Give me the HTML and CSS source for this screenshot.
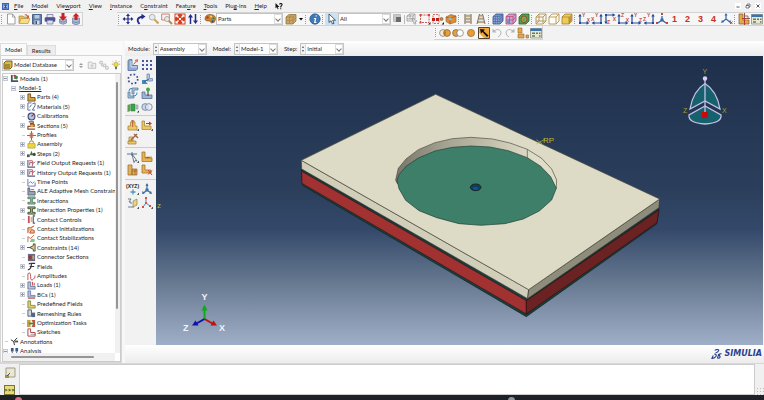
FILE: index.html
```html
<!DOCTYPE html>
<html lang="en">
<head>
<meta charset="utf-8">
<title>Model-1 Assembly</title>
<link rel="stylesheet" href="styles.css">
</head>
<body>
<svg class="defs" aria-hidden="true">
  <defs>
    <symbol id="new" viewBox="0 0 12 12"><path d="M2.500 1h5l2.500 3v7h-7.500z" fill="#fff" stroke="#888" stroke-width=".8"/><path d="M7.500 1v3H10" fill="none" stroke="#888" stroke-width=".7"/></symbol>
    <symbol id="open" viewBox="0 0 12 12"><path d="M1 10V3h4l1 1h4v2" fill="#e8bd5c" stroke="#9a7833" stroke-width=".6"/><path d="M1 10.500l2-5h9l-2 5z" fill="#f8dc83" stroke="#a98333" stroke-width=".6"/><path d="M6 2q3-2 4 1l1-1v3H8.500l1-1Q8.500 2 6 2z" fill="#d55a30"/></symbol>
    <symbol id="save" viewBox="0 0 12 12"><path d="M1.500 1.500h9v9.500h-9z" fill="#5f7fac" stroke="#354e75" stroke-width=".8"/><path d="M3.500 2h5v3.500h-5z" fill="#b9c9df"/><path d="M3.500 7.500h5V11h-5z" fill="#d9dde3"/><path d="M4.500 8h1.500v3H4.500z" fill="#354e75"/></symbol>
    <symbol id="print" viewBox="0 0 12 12"><path d="M3 1.500h6V5H3z" fill="#e8e8ef" stroke="#55588a" stroke-width=".6"/><rect x=".7" y="4.200" width="10.600" height="4.500" rx="1" fill="#4d5396"/><path d="M3 7.200h6V11H3z" fill="#dedff0" stroke="#55588a" stroke-width=".6"/></symbol>
    <symbol id="dbdown" viewBox="0 0 12 12"><path d="M2.500 6v4q3.500 2.500 7 0V6z" fill="#a9bad4" stroke="#5e6f90" stroke-width=".6"/><path d="M3 8.200q3 1.800 6 0" fill="none" stroke="#5e6f90" stroke-width=".6"/><path d="M4.500 0h3v3.500H10L6 7.800 2 3.500h2.500z" fill="#cd1f24"/></symbol>
    <symbol id="dbup" viewBox="0 0 12 12"><path d="M2.500 5v5.500q3.500 2.500 7 0V5z" fill="#a9bad4" stroke="#5e6f90" stroke-width=".6"/><path d="M3 8.700q3 1.800 6 0" fill="none" stroke="#5e6f90" stroke-width=".6"/><path d="M6 0l3.500 3.500h-2V7h-3V3.500h-2z" fill="#cd1f24"/></symbol>
    <symbol id="pan" viewBox="0 0 12 12"><path d="M6 .5l2 2.500H6.600v2.400H9V4l2.500 2L9 8V6.600H6.600V9H8l-2 2.500L4 9h1.400V6.600H3V8L.5 6 3 4v1.400h2.400V3H4z" fill="#252b8c"/></symbol>
    <symbol id="rotate" viewBox="0 0 12 12"><path d="M4.500 11Q-.5 5 8 3.500" fill="none" stroke="#252b8c" stroke-width="1.800"/><path d="M6.500 .7l4 2.800-4 3z" fill="#252b8c"/></symbol>
    <symbol id="mag" viewBox="0 0 12 12"><path d="M6 6l4.500 4.500" stroke="#c9a25c" stroke-width="2"/><circle cx="4.200" cy="4.200" r="2.900" fill="#e5eaee" stroke="#b3b3af" stroke-width="1"/></symbol>
    <symbol id="magbox" viewBox="0 0 12 12"><path d="M.7 1h7.600v6H.7z" fill="none" stroke="#d45b4b" stroke-width=".8"/><path d="M7.500 7.500L11 11" stroke="#b98c3b" stroke-width="2"/><circle cx="6" cy="6" r="2.500" fill="#eee9dc" stroke="#a19b8c" stroke-width=".8"/></symbol>
    <symbol id="fit" viewBox="0 0 12 12"><path d="M.5.5h11v11H.5z" fill="#d4401f"/><path d="M1.500 1.500h3L3.500 2.500 5 4 4 5 2.500 3.500l-1 1zm9 0v3l-1-1L8 5 7 4l1.500-1.500-1-1zm-9 9v-3l1 1L4 7l1 1-1.500 1.500 1 1zm9 0h-3l1-1L7 8l1-1 1.500 1.500 1-1z" fill="#fff"/><path d="M5 5h2v2H5z" fill="#fff"/></symbol>
    <symbol id="updown" viewBox="0 0 12 12"><path d="M3.500 11V3M8.500 1v8" stroke="#252b8c" stroke-width="1.500"/><path d="M1 4.500l2.500-3.500L6 4.500zM6 7.500h5L8.500 11z" fill="#252b8c"/></symbol>
    <symbol id="palette" viewBox="0 0 12 12"><path d="M1 5q1-4 6-3.500 5 .5 4.500 5Q11 10 7.500 10q-1-.3-1.500-2L3 8Q.5 7.500 1 5z" fill="#c98438" stroke="#7d4d22" stroke-width=".6"/><circle cx="3.500" cy="4.500" r="1.200" fill="#d12c22"/><circle cx="7" cy="3.500" r="1.100" fill="#f3d544"/><circle cx="9.500" cy="5.500" r="1.100" fill="#2f8a3c"/><circle cx="8.500" cy="8.300" r="1.100" fill="#2450a4"/></symbol>
    <symbol id="cube" viewBox="0 0 12 12"><path d="M1 4l3-2.500h7V8l-3 3H1z" fill="#cba663" stroke="#8a6d38" stroke-width=".7"/><path d="M1 4h7v7M8 4l3-2.500M4.500 4v7M1 7.500h7l3-3M4.500 4L7.500 1.500" fill="none" stroke="#9d7d45" stroke-width=".6"/></symbol>
    <symbol id="info" viewBox="0 0 12 12"><circle cx="6" cy="6" r="5.200" fill="#3d78b8" stroke="#27588f" stroke-width=".7"/><path d="M6.700 2.200h1V3.500H6.400zM5 5h2.300L6.500 9h1l-.2.900H5L5.800 6H4.800z" fill="#fff"/></symbol>
    <symbol id="cursor" viewBox="0 0 12 12"><path d="M3 1v8.500l2-1.800L6.500 11 8 10.300 6.700 7.200h2.800z" fill="#fff" stroke="#30363d" stroke-width=".8"/></symbol>
    <symbol id="selgray" viewBox="0 0 12 12"><path d="M1.500 1.500h7v7h-7z" fill="#c8c8c8" stroke="#aaa" stroke-width=".7"/><path d="M4 4h5v5H4z" fill="#6b6b6b"/></symbol>
    <symbol id="wiregray" viewBox="0 0 12 12"><path d="M1 3l3-2h5v5L7 8H1zM1 3h6v5M7 3l2-2M4 1v5H1M4 6h5M5 5l5 5" fill="none" stroke="#999" stroke-width=".8"/><path d="M6 5l5 3-2 1 1 2H8z" fill="#ddd" stroke="#888" stroke-width=".5"/></symbol>
    <symbol id="selbox" viewBox="0 0 12 12"><path d="M1.500 2h8.500v7.500H1.500z" fill="none" stroke="#c84b3e" stroke-width=".9" stroke-dasharray="2 1"/><path d="M.5 1h2v2h-2zM9 1h2v2H9zM.5 8.500h2v2h-2z" fill="#cb4638"/><path d="M9 11.500l2.500-2.500v2.500z" fill="#222"/></symbol>
    <symbol id="selnode" viewBox="0 0 12 12"><path d="M1 1.500h6v9H1z" fill="none" stroke="#c84b3e" stroke-width=".8" stroke-dasharray="2 1"/><path d="M0 5h3v3H0zM4 5h3v3H4z" fill="#c11f1a"/><circle cx="9.500" cy="6" r="1.600" fill="#c98536" stroke="#7d4d22" stroke-width=".5"/><path d="M9.500 11.500L12 9v2.500z" fill="#222"/></symbol>
    <symbol id="orangebox" viewBox="0 0 12 12"><path d="M1 4l5-2.500L11 3v6L5 11 1 8.500z" fill="#e38d2f" stroke="#7d6444" stroke-width=".6"/><path d="M1 4l4 1.500L11 3M5 5.500V11" fill="none" stroke="#8a5a20" stroke-width=".7"/><path d="M3 5.500l3-1 1 2-2 1z" fill="#8ac0dd"/></symbol>
    <symbol id="persp1" viewBox="0 0 12 12"><path d="M3 1v10M9 1v10" stroke="#716a59" stroke-width="1"/><path d="M3 2h6v1.500H3zM3 5h6v1.500H3zM3 8h6v1.500H3z" fill="#c8b58c" stroke="#887653" stroke-width=".4"/></symbol>
    <symbol id="persp2" viewBox="0 0 12 12"><path d="M4.500 1L2 11M7.500 1L10 11" stroke="#716a59" stroke-width="1"/><path d="M4.500 2h3v1.300h-3zM3.700 5h4.600v1.400H3.500zM3 8.300h6v1.400H3z" fill="#c8b58c" stroke="#887653" stroke-width=".4"/></symbol>
    <symbol id="meshblue" viewBox="0 0 12 12"><path d="M1 3.500l3-2.500h7v7l-3 3H1z" fill="#8ba5d6" stroke="#33518b" stroke-width=".8"/><path d="M1 3.500h7V11M8 3.500L11 1M3.300 3.500V11M5.700 3.500V11M1 6h7l3-3M1 8.500h7l3-3M3 2h7v7" fill="none" stroke="#3f5f9c" stroke-width=".6"/></symbol>
    <symbol id="meshred" viewBox="0 0 12 12"><path d="M1 3.500l3-2.500h7v7l-3 3H1z" fill="#b9a7dd" stroke="#a34a6b" stroke-width=".8"/><path d="M1 3.500h7V11M8 3.500L11 1M4.500 3.500V11M1 7h7l3-3" fill="none" stroke="#cf4161" stroke-width=".7"/><path d="M2 7.500h2V10H2z" fill="#6f8cd0"/></symbol>
    <symbol id="meshgreen" viewBox="0 0 12 12"><path d="M1 4l3-3h7v7l-3 3H1z" fill="#4da349" stroke="#286229" stroke-width=".8"/><ellipse cx="6" cy="6.300" rx="3" ry="3.300" fill="#b8904c" stroke="#7a3d2a" stroke-width=".7"/><ellipse cx="6" cy="6.500" rx="1.200" ry="1.500" fill="#5aa551"/></symbol>
    <symbol id="wire1" viewBox="0 0 12 12"><path d="M1 4l3-3h7v7l-3 3H1zM1 4h7v7M8 4l3-3M4 1v7H1M4 8h7M4 8l-3 3" fill="none" stroke="#b5944e" stroke-width=".9"/></symbol>
    <symbol id="wire2" viewBox="0 0 12 12"><path d="M1 4l3-3h7v7l-3 3H1zM1 4h7v7M8 4l3-3" fill="#fffdf5" stroke="#b5944e" stroke-width=".9"/></symbol>
    <symbol id="solid" viewBox="0 0 12 12"><path d="M1 4l3-3h7v7l-3 3H1z" fill="#f0cb53" stroke="#92702c" stroke-width=".7"/><path d="M8 4l3-3v7l-3 3z" fill="#c3973b"/><path d="M1 4h7v7" fill="none" stroke="#92702c" stroke-width=".6"/></symbol>
    <symbol id="ax" viewBox="0 0 12 12"><path d="M2 2v8h8" fill="none" stroke="#244b9b" stroke-width="1.200"/><path d="M.3 3.500L2 .8l1.700 2.700zM8.500 8.300L11.500 10l-3 1.700zM1 9h2v2H1z" fill="#244b9b"/></symbol>
    <symbol id="axl" viewBox="0 0 12 12"><path d="M10 2v8H2" fill="none" stroke="#244b9b" stroke-width="1.200"/><path d="M8.300 3.500L10 .8l1.700 2.700zM3.500 8.300L.5 10l3 1.700zM9 9h2v2H9z" fill="#244b9b"/></symbol>
    <symbol id="axd" viewBox="0 0 12 12"><path d="M2 10V2h8" fill="none" stroke="#244b9b" stroke-width="1.200"/><path d="M.3 8.500L2 11.200l1.700-2.700zM8.500.3L11.500 2l-3 1.700zM1 1h2v2H1z" fill="#244b9b"/></symbol>
    <symbol id="tri" viewBox="0 0 12 12"><path d="M6 3v4L2 10M6 7l4 3" fill="none" stroke="#3667a8" stroke-width="1.300"/><path d="M5 0h2v2H5zM0 9h2v2H0zM10 9h2v2h-2z" fill="#c0473f"/><path d="M4.500 5.500h3v3h-3z" fill="#3667a8"/></symbol>
    <symbol id="tri2" viewBox="0 0 12 12"><path d="M5 1.500V6L1.500 9M5 6l4 3" fill="none" stroke="#3667a8" stroke-width="1.200"/><path d="M3.500 2.500L5 0l1.500 2.500zM0 10l1-3 2 2zM7.500 9l2-2 .5 3z" fill="#3667a8"/><path d="M9 8.500l2.500 2.500M11.500 8.500L9 11" stroke="#ce3a2e" stroke-width="1"/></symbol>
    <symbol id="query" viewBox="0 0 12 12"><path d="M1 1h4v6h6v4H1z" fill="#dfa94d" stroke="#7b5b2d" stroke-width=".7"/><path d="M6.500 0v12M4 5.500h8" stroke="#a6322c" stroke-width=".9"/><path d="M6 3h4v3" fill="none" stroke="#5c5862" stroke-width=".8"/></symbol>
    <symbol id="table" viewBox="0 0 12 12"><path d="M.5 1.500h11v9.500H.5z" fill="#e9e6d2" stroke="#7f8274" stroke-width=".7"/><path d="M.5 1.500h11V4H.5z" fill="#3973b0"/><path d="M2 5.500h3V7H2zM6 5.500h2V7H6zM9 5.500h1.500V7H9zM2 8.300h3v1.500H2zM9 8.300h1.500v1.500H9z" fill="#598061"/></symbol>
    <symbol id="both" viewBox="0 0 12 12"><circle cx="4" cy="6" r="3.400" fill="#f7ead4" stroke="#8a8579" stroke-width=".8"/><circle cx="8" cy="6" r="3.400" fill="#e3a142" stroke="#8e6a35" stroke-width=".8"/><path d="M6 3.200q2 2.800 0 5.600-2-2.800 0-5.600z" fill="#b97622"/></symbol>
    <symbol id="left" viewBox="0 0 12 12"><circle cx="4" cy="6" r="3.400" fill="#e3a142" stroke="#8e6a35" stroke-width=".8"/><circle cx="8" cy="6" r="3.400" fill="#fff" stroke="#8a8579" stroke-width=".8"/><path d="M6 3.200q-3 2.800 0 5.600" fill="none" stroke="#8a8579" stroke-width=".7"/></symbol>
    <symbol id="dot" viewBox="0 0 12 12"><circle cx="6" cy="6" r="3.600" fill="#e69c38" stroke="#9b6c2d" stroke-width=".7"/></symbol>
    <symbol id="dark" viewBox="0 0 12 12"><path d="M.5.5h11v11H.5z" fill="#f0a73e" stroke="#53442d"/><path d="M1 6v5h5z" fill="#fff2d8"/><path d="M2 2l5 .500-1.500 1.500 5 4.500-1.500 1.500-4.500-5L3 6.500z" fill="#111"/></symbol>
    <symbol id="undo" viewBox="0 0 12 12"><path d="M3 4q5-3.500 7 1 .5 3.500-3 5" fill="none" stroke="#b5b5b5" stroke-width="1"/><path d="M1.500 1.500v4h4z" fill="#b5b5b5"/></symbol>
    <symbol id="redo" viewBox="0 0 12 12"><path d="M9 4Q4 .5 2 5q-.5 3.500 3 5" fill="none" stroke="#b5b5b5" stroke-width="1"/><path d="M10.500 1.500v4h-4z" fill="#b5b5b5"/></symbol>
    <symbol id="parts" viewBox="0 0 12 12"><path d="M1 1h4v5H1zM1 7h6v4H1zM9 8h2.500v3H9z" fill="#e2a749" stroke="#8e6a35" stroke-width=".6"/></symbol>
    <symbol id="Lpart" viewBox="0 0 12 12"><path d="M1 1.500L2.500.5H5v6h5.500V10L9 11.500H1z" fill="#8fa9d0" stroke="#4a628f" stroke-width=".7"/><path d="M4 2v6h6" fill="none" stroke="#d5e0f0"/><path d="M6.500 5.500L9.500 2M8 1.500l2.500-.8-.5 2.500" fill="none" stroke="#d44a3a" stroke-width="1"/></symbol>
    <symbol id="grid" viewBox="0 0 12 12"><path d="M1 1h2v2H1zM5 1h2v2H5zM9 1h2v2H9zM1 5h2v2H1zM5 5h2v2H5zM9 5h2v2H9zM1 9h2v2H1zM5 9h2v2H5zM9 9h2v2H9z" fill="#4358a5"/></symbol>
    <symbol id="ring" viewBox="0 0 12 12"><circle cx="6" cy="6" r="4.700" fill="none" stroke="#394c9d" stroke-width="1.700" stroke-dasharray="1.700 1.990"/></symbol>
    <symbol id="move" viewBox="0 0 12 12"><path d="M6 1h2.500v4.500h3V8H6z" fill="#b4c7df" stroke="#6483ab" stroke-width=".7"/><path d="M1 7h5l-1.500 1.500L7 11H1z" fill="#4c86b5"/><path d="M3 9l5-3" stroke="#2e648f"/></symbol>
    <symbol id="trans" viewBox="0 0 12 12"><path d="M1 5h2v4h4v2H1zM5 1h6v2H7v4H5z" fill="#a9c3de" stroke="#4e7096" stroke-width=".7"/><path d="M2 4q0-3 3-2.500M6 8.500q4 1 4-3" fill="none" stroke="#2d8ac1" stroke-width="1"/></symbol>
    <symbol id="greenpin" viewBox="0 0 12 12"><path d="M1 5h3v3h7v3.500H1z" fill="#9eb4d4" stroke="#4a628f" stroke-width=".7"/><path d="M7 3v6" stroke="#343434"/><circle cx="7" cy="2.500" r="2" fill="#3faa3e"/></symbol>
    <symbol id="greenblk" viewBox="0 0 12 12"><path d="M.5 4l3-1v7l-3 1z" fill="#5c9d58"/><path d="M4 3h4v7H4z" fill="#3da348" stroke="#277131" stroke-width=".5"/><path d="M9 4h2v4H9z" fill="#b9cbd7" stroke="#688" stroke-width=".5"/><path d="M10 11.500l2-2v2z" fill="#222"/></symbol>
    <symbol id="rings" viewBox="0 0 12 12"><circle cx="4.200" cy="6" r="3.400" fill="#c8d5e8" stroke="#6d7f9c" stroke-width=".8"/><circle cx="7.800" cy="6" r="3.400" fill="#e9eef6" fill-opacity=".7" stroke="#6d7f9c" stroke-width=".8"/></symbol>
    <symbol id="ypart" viewBox="0 0 12 12"><path d="M1 7h2.500V3H8v4h2v4H1z" fill="#ecc764" stroke="#a17b34" stroke-width=".7"/><path d="M5.700 1v7M4 2h3.400" stroke="#ba5a36" stroke-width="1"/><path d="M10 11.800l2-2v2z" fill="#222"/></symbol>
    <symbol id="ypart2" viewBox="0 0 12 12"><path d="M1 2h2.500v5H10v3.500H1z" fill="#ecc764" stroke="#a17b34" stroke-width=".7"/><path d="M5 4.500h3" stroke="#c93a2b"/><path d="M8 2.500l3 2-3 2z" fill="#c93a2b"/><path d="M10 11.800l2-2v2z" fill="#222"/></symbol>
    <symbol id="yedit" viewBox="0 0 12 12"><path d="M1 8h8v3H1zM2 4h4v4H2z" fill="#ecc764" stroke="#a17b34" stroke-width=".7"/><path d="M4 7l6-6M7 1l4 4" stroke="#9e5f4d" stroke-width="1.300"/></symbol>
    <symbol id="datum" viewBox="0 0 12 12"><path d="M0 3h10M5 1v4" stroke="#3c6b9a" stroke-width=".9"/><path d="M5 3l5 7-2-.5L7 11.500z" fill="#fff" stroke="#4a5968" stroke-width=".8"/><path d="M10 11.800l2-2v2z" fill="#222"/></symbol>
    <symbol id="oL" viewBox="0 0 12 12"><path d="M1 1h3v6h7v3.500H1z" fill="#e8b452" stroke="#97692c" stroke-width=".7"/><path d="M4 7l2-1h5" stroke="#bf8d3b" stroke-width=".7"/></symbol>
    <symbol id="oblk" viewBox="0 0 12 12"><path d="M1 1h4v10H1zM5 5h5v6H5z" fill="#e0b25a" stroke="#97692c" stroke-width=".7"/><path d="M6 7h4M8 5v6" stroke="#9c3c31" stroke-width=".6"/></symbol>
    <symbol id="ocut" viewBox="0 0 12 12"><path d="M1 1h3v5h6v3H1z" fill="#e8b452" stroke="#97692c" stroke-width=".7"/><path d="M7 6l4 5M11 6.500l-4 4" stroke="#c83c31" stroke-width="1"/></symbol>
    <symbol id="plus" viewBox="0 0 12 12"><path d="M6 6.500v5M3.500 9h5" stroke="#4a96c3" stroke-width="1.300"/><path d="M10 11.800l2-2v2z" fill="#222"/></symbol>
    <symbol id="csys" viewBox="0 0 12 12"><path d="M6 1v6L2 10.500M6 7l4 3" fill="none" stroke="#3d6fa1" stroke-width="1.200"/><path d="M4.500 3L6 0l1.500 3zM1 11l.5-3L4 10zM11 11l-3-.5L10 8z" fill="#3d6fa1"/><path d="M4.500 5.500h3v3h-3z" fill="#3d6fa1"/></symbol>
    <symbol id="zy" viewBox="0 0 12 12"><path d="M1 2h3L2 5h2v2M1 10h6" fill="none" stroke="#5d7186" stroke-width=".9"/><path d="M6 4l4-2v6l-4 2z" fill="#ead57f" stroke="#7a7350" stroke-width=".6"/><path d="M10 11.800l2-2v2z" fill="#222"/></symbol>
    <symbol id="redtri" viewBox="0 0 12 12"><path d="M5 2v4L2 10M5 6l4 3" fill="none" stroke="#488bc1" stroke-width="1"/><path d="M4 0h2v2H4zM1 9h2v2H1zM8 8h2v2H8zM4 5h2v2H4z" fill="#d45147"/><path d="M10 11.800l2-2v2z" fill="#222"/></symbol>

    <symbol id="t-models" viewBox="0 0 10 10"><path d="M1 1h2v6h6v2H1z" fill="#4b5660"/><path d="M4 5l2-4 3 2-1 3z" fill="#477d4e"/><circle cx="5" cy="2" r="1.200" fill="#b83831"/></symbol>
    <symbol id="t-parts" viewBox="0 0 10 10"><path d="M1 1h3v4h5v4H1z" fill="#d7a33c" stroke="#5b4320" stroke-width=".9"/></symbol>
    <symbol id="t-mat" viewBox="0 0 10 10"><path d="M1 1h4M1 1v8h3M6 2l3-1v3L6 9h3M5 3L3 6" fill="none" stroke="#5c6f99" stroke-width="1.100"/></symbol>
    <symbol id="t-cal" viewBox="0 0 10 10"><circle cx="5" cy="5" r="3.800" fill="#b9c4df" stroke="#3b4580" stroke-width="1.200"/><path d="M5 5l3-3" stroke="#bc3a34" stroke-width="1.300"/></symbol>
    <symbol id="t-sec" viewBox="0 0 10 10"><path d="M2 1h5v2H4v1h4v2H1v3h8" fill="none" stroke="#8f502e" stroke-width="1.300"/><path d="M4 4h3v3H4z" fill="#e7a942"/></symbol>
    <symbol id="t-prof" viewBox="0 0 10 10"><path d="M0 5h10M5 0v10" stroke="#9d5146" stroke-width="1"/><path d="M3 2h4v6H3z" fill="#c7694d" fill-opacity=".75"/></symbol>
    <symbol id="t-asm" viewBox="0 0 10 10"><path d="M3 4V2q2-2 4 0v2" fill="none" stroke="#b3a24a" stroke-width="1.200"/><path d="M1 4h8v5H1z" fill="#ebd840" stroke="#ab9728" stroke-width=".7"/></symbol>
    <symbol id="t-step" viewBox="0 0 10 10"><path d="M0 6h3v3H0z" fill="#555"/><path d="M3 7L5 2l2 5z" fill="#3c7047"/><circle cx="8" cy="6" r="1.700" fill="#444"/></symbol>
    <symbol id="t-out" viewBox="0 0 10 10"><path d="M1 1v8h8" fill="none" stroke="#555c7d" stroke-width="1.200"/><path d="M2 2h4l1 3 2-2M3 7V4h3v4" fill="none" stroke="#b24a5b" stroke-width="1"/></symbol>
    <symbol id="t-time" viewBox="0 0 10 10"><path d="M1 1v8h8V5" fill="none" stroke="#5e6da5" stroke-width="1"/><path d="M2 6l2-2 2 2 2-2" fill="none" stroke="#5376bd" stroke-width="1"/></symbol>
    <symbol id="t-ale" viewBox="0 0 10 10"><path d="M1 1h2v4h6v4H1z" fill="#9aa2b5" stroke="#454c61" stroke-width=".8"/><path d="M4 3h4" stroke="#b44040"/></symbol>
    <symbol id="t-int" viewBox="0 0 10 10"><path d="M1 1h8v2H6v4h3v2H1V7h3V3H1z" fill="#8abf9b" stroke="#426e5a" stroke-width=".8"/></symbol>
    <symbol id="t-intp" viewBox="0 0 10 10"><path d="M1 1h8v2H6v4h3v2H1V7h3V3H1z" fill="#c1b34d" stroke="#3a4e3c" stroke-width="1"/></symbol>
    <symbol id="t-ctl" viewBox="0 0 10 10"><path d="M1 1h2v8H1z" fill="#c05069"/><path d="M4 2h2v6H4z" fill="#e2bb48"/><path d="M9 1H7v8h2" fill="none" stroke="#5058a4" stroke-width="1.200"/></symbol>
    <symbol id="t-init" viewBox="0 0 10 10"><path d="M1 9V3h3l4-2M3 9l2-4 3 1v3z" fill="#e7c374" stroke="#c34742" stroke-width="1"/></symbol>
    <symbol id="t-stab" viewBox="0 0 10 10"><path d="M1 9V3l3 2 4-4" fill="none" stroke="#d0604e" stroke-width="1"/><path d="M3 9l2-4 4 1-1 3z" fill="#7ccc83"/></symbol>
    <symbol id="t-con" viewBox="0 0 10 10"><path d="M9 1v8H7V7L3 5l4-2V1zM0 5h4" fill="#dfcf8f" stroke="#4b4a38" stroke-width="1"/></symbol>
    <symbol id="t-conn" viewBox="0 0 10 10"><path d="M1 1h8v8H1z" fill="#676b88"/><path d="M2 3h3v4H2z" fill="#9c3535"/><path d="M6 3h2v4H6z" fill="#c2a567"/></symbol>
    <symbol id="t-fld" viewBox="0 0 10 10"><path d="M9 1.500H5Q4.500 9 1 8.500M3 5h5M2 2.500Q3 1 5 1.500" fill="none" stroke="#333" stroke-width="1.300"/></symbol>
    <symbol id="t-amp" viewBox="0 0 10 10"><path d="M1 9V2q3-3 3 3t3 3q2-1 2-4" fill="none" stroke="#c35255" stroke-width="1.100"/></symbol>
    <symbol id="t-load" viewBox="0 0 10 10"><path d="M1 1v8h8V6H4V1z" fill="#bac3dc" stroke="#516087" stroke-width=".8"/><path d="M6 1v4M8 2v3" stroke="#c6423f" stroke-width="1.100"/></symbol>
    <symbol id="t-bc" viewBox="0 0 10 10"><path d="M1 1v7h8V6H4V1z" fill="#b5bfe0" stroke="#5a6795" stroke-width=".8"/><path d="M1 9.300h8" stroke="#c05a57"/></symbol>
    <symbol id="t-pre" viewBox="0 0 10 10"><path d="M1 1v8h8V6H4V1z" fill="#f0c95b" stroke="#5f8b4c" stroke-width=".9"/></symbol>
    <symbol id="t-rem" viewBox="0 0 10 10"><path d="M1 1h4v7H1z" fill="#d4d9df" stroke="#3f4b5c" stroke-width=".9"/><path d="M5 4h4v5H5z" fill="#536886"/></symbol>
    <symbol id="t-opt" viewBox="0 0 10 10"><path d="M0 1h4v8H0z" fill="#c7a243"/><path d="M5 1h4v8H5L7 5z" fill="#c2553c"/><path d="M2 5h6" stroke="#3b8e4c" stroke-width="2"/></symbol>
    <symbol id="t-sk" viewBox="0 0 10 10"><path d="M1 1h3v4h5v4H1z" fill="none" stroke="#b0494f" stroke-width="1.100"/><path d="M4 7h6" stroke="#777" stroke-width=".8"/></symbol>
    <symbol id="t-ann" viewBox="0 0 10 10"><path d="M1 3l3 2 4-4M4 5l1 4" fill="none" stroke="#333" stroke-width="1.100"/><path d="M5 4h4v2H5z" fill="#555"/></symbol>
    <symbol id="t-ana" viewBox="0 0 10 10"><path d="M1 1h3v4H1zM6 1h3v4H6z" fill="#395b85"/><path d="M2 5h1v4H2zM7 5h1v4H7z" fill="#395b85"/></symbol>
    <symbol id="t-db" viewBox="0 0 10 10"><path d="M1 3l2-2h6v6L7 9H1z" fill="#dcb947" stroke="#655223" stroke-width=".9"/><path d="M2 5h5M2 7h5" stroke="#4e452b" stroke-width=".8"/></symbol>
    <symbol id="bulb" viewBox="0 0 12 12"><circle cx="6" cy="5.500" r="2.700" fill="#eedb3c" stroke="#a19330" stroke-width=".6"/><path d="M5 8h2v3H5z" fill="#52585f"/><path d="M1 5h1.500M9.500 5H11M2 1.500l1 1M10 1.500l-1 1M6 .5v1.300" stroke="#7f7c43" stroke-width=".8"/></symbol>
    <symbol id="folderg" viewBox="0 0 12 12"><path d="M1.500 2.500h4l1 1.500h4v6h-9z" fill="#eee" stroke="#bbb"/><path d="M6 9V6M4.500 7L6 5.500 7.500 7" fill="none" stroke="#bbb"/></symbol>
    <symbol id="nodesg" viewBox="0 0 12 12"><path d="M1 1.500h3v3H1zM5 5h3v3H5zM8 8h3v3H8zM3 5v2h2" fill="none" stroke="#bbb" stroke-width="1.100"/></symbol>
  </defs>
</svg>

<header>
  <nav class="menubar">
    <svg class="app" viewBox="0 0 10 10"><path d="M0 0h10v10H0z" fill="#3a64b4"/><path d="M2 2h6v6H2z" fill="#cfdcf2"/><path d="M3 2h4v2H6v2h1v2H3V6h1V4H3z" fill="#284c9b"/></svg>
    <a href="#"><u>F</u>ile</a><a href="#"><u>M</u>odel</a><a href="#">Vie<u>w</u>port</a><a href="#"><u>V</u>iew</a><a href="#"><u>I</u>nstance</a><a href="#">C<u>o</u>nstraint</a><a href="#">Feat<u>u</u>re</a><a href="#"><u>T</u>ools</a><a href="#">Plu<u>g</u>-ins</a><a href="#"><u>H</u>elp</a><a href="#" class="what" aria-label="Context help"><svg viewBox="0 0 8 8"><path d="M0 0v6l1.500-1.200L2.500 7l1-.5-1-2h2z" fill="#111"/><path d="M4.500 1.500q2-2 3 0Q7.500 3 6 4v1M6 6v1.200" fill="none" stroke="#111" stroke-width="1.200"/></svg></a>
    <span class="win">
      <button aria-label="Minimize"><svg viewBox="0 0 6 6"><path d="M1.500 4h3" stroke="#556"/></svg></button>
      <button aria-label="Restore"><svg viewBox="0 0 6 6"><path d="M1 2.500h3V5H1zM2 2.500V1h3v3H4" fill="none" stroke="#556" stroke-width=".8"/></svg></button>
      <button aria-label="Close"><svg viewBox="0 0 6 6"><path d="M1.500 1.500l3 3M4.500 1.500l-3 3" stroke="#556"/></svg></button>
    </span>
  </nav>

  <div class="tools">
    <div class="bar">
      <i class="grip"></i>
      <button aria-label="New"><svg><use href="#new"/></svg></button><button aria-label="Open"><svg><use href="#open"/></svg></button><button aria-label="Save"><svg><use href="#save"/></svg></button><button aria-label="Print"><svg><use href="#print"/></svg></button><button aria-label="Import"><svg><use href="#dbdown"/></svg></button><button aria-label="Export"><svg><use href="#dbup"/></svg></button>
    </div>
    <div class="bar second">
      <i class="grip"></i>
      <button aria-label="Pan"><svg><use href="#pan"/></svg></button><button aria-label="Rotate"><svg><use href="#rotate"/></svg></button><button aria-label="Magnify"><svg><use href="#mag"/></svg></button><button aria-label="Box zoom"><svg><use href="#magbox"/></svg></button><button aria-label="Fit"><svg><use href="#fit"/></svg></button><button aria-label="Cycle views"><svg><use href="#updown"/></svg></button>
      <i class="grip"></i>
      <button aria-label="Colors"><svg><use href="#palette"/></svg></button>
      <span class="combo c-parts"><select aria-label="Color by"><option>Parts</option></select></span>
      <button aria-label="Render"><svg><use href="#cube"/></svg></button><button class="drop" aria-label="More"><svg viewBox="0 0 6 6"><path d="M1 2h4L3 4.500z"/></svg></button>
      <i class="grip"></i>
      <button aria-label="Info"><svg><use href="#info"/></svg></button>
      <i class="grip"></i>
      <button class="on" aria-label="Select"><svg><use href="#cursor"/></svg></button>
      <span class="combo c-all"><select aria-label="Filter"><option>All</option></select></span>
      <button aria-label="Group"><svg><use href="#selgray"/></svg></button><i class="rule"></i>
      <button aria-label="Wire select"><svg><use href="#wiregray"/></svg></button><button aria-label="Box select"><svg><use href="#selbox"/></svg></button><button aria-label="Node select"><svg><use href="#selnode"/></svg></button><button aria-label="Solid select"><svg><use href="#orangebox"/></svg></button>
      <i class="grip"></i>
      <button aria-label="Parallel"><svg><use href="#persp1"/></svg></button><button aria-label="Perspective"><svg><use href="#persp2"/></svg></button>
      <i class="grip"></i>
      <button aria-label="Mesh"><svg><use href="#meshblue"/></svg></button><button aria-label="Seeds"><svg><use href="#meshred"/></svg></button><button aria-label="Geometry"><svg><use href="#meshgreen"/></svg></button>
      <i class="grip"></i>
      <button aria-label="Wireframe"><svg><use href="#wire1"/></svg></button><button aria-label="Hidden"><svg><use href="#wire2"/></svg></button><button aria-label="Shaded"><svg><use href="#solid"/></svg></button>
      <i class="grip"></i>
      <button class="axis yx" aria-label="Front"><svg><use href="#ax"/></svg><b>Y</b><b>X</b></button><button class="axis xy" aria-label="Back"><svg><use href="#axl"/></svg><b>Y</b><b>X</b></button><button class="axis zx" aria-label="Top"><svg><use href="#axd"/></svg><b>X</b><b>Z</b></button><button class="axis yx" aria-label="Bottom"><svg><use href="#ax"/></svg><b>Z</b><b>X</b></button><button class="axis yx" aria-label="Left"><svg><use href="#ax"/></svg><b>Y</b><b>Z</b></button><button class="axis xy" aria-label="Right"><svg><use href="#axl"/></svg><b>Y</b><b>Z</b></button><button aria-label="Iso"><svg><use href="#tri"/></svg></button><button class="num">1</button><button class="num">2</button><button class="num">3</button><button class="num">4</button><button aria-label="Save view"><svg><use href="#tri2"/></svg></button>
      <i class="grip"></i>
      <button aria-label="Query"><svg><use href="#query"/></svg></button><button aria-label="Table"><svg><use href="#table"/></svg></button>
    </div>
  </div>
  <div class="tools lower">
    <div class="bar">
      <i class="grip"></i>
      <button aria-label="Union"><svg><use href="#both"/></svg></button><button aria-label="Remove"><svg><use href="#left"/></svg></button><button aria-label="Replace"><svg><use href="#dot"/></svg></button><button aria-label="Invert"><svg><use href="#dark"/></svg></button><button aria-label="Undo"><svg><use href="#undo"/></svg></button><button aria-label="Redo"><svg><use href="#redo"/></svg></button><button aria-label="Display parts"><svg><use href="#parts"/></svg></button><button aria-label="Display groups"><svg><use href="#table"/></svg></button>
    </div>
  </div>
</header>

<main>
  <aside>
    <div class="tabs"><button class="sel">Model</button><button>Results</button></div>
    <div class="panel">
      <div class="dbrow">
        <span class="combo c-db"><svg><use href="#t-db"/></svg><select aria-label="Source"><option>Model Database</option></select></span>
        <button class="spin" aria-label="Move"></button>
        <button aria-label="Up"><svg><use href="#folderg"/></svg></button>
        <button aria-label="Filter"><svg><use href="#nodesg"/></svg></button>
        <button aria-label="Tips"><svg><use href="#bulb"/></svg></button>
      </div>
      <div class="treebox">
        <div class="tree">
          <ul>
            <li class="l0"><i class="ex minus"></i><svg><use href="#t-models"/></svg>Models (1)</li>
            <li class="l1"><i class="ex minus"></i><u>Model-1</u></li>
            <li class="l2"><i class="ex"></i><svg><use href="#t-parts"/></svg>Parts (4)</li>
            <li class="l2"><i class="ex"></i><svg><use href="#t-mat"/></svg>Materials (5)</li>
            <li class="l2"><i class="no"></i><svg><use href="#t-cal"/></svg>Calibrations</li>
            <li class="l2"><i class="ex"></i><svg><use href="#t-sec"/></svg>Sections (5)</li>
            <li class="l2"><i class="no"></i><svg><use href="#t-prof"/></svg>Profiles</li>
            <li class="l2"><i class="ex"></i><svg><use href="#t-asm"/></svg>Assembly</li>
            <li class="l2"><i class="ex"></i><svg><use href="#t-step"/></svg>Steps (2)</li>
            <li class="l2"><i class="ex"></i><svg><use href="#t-out"/></svg>Field Output Requests (1)</li>
            <li class="l2"><i class="ex"></i><svg><use href="#t-out"/></svg>History Output Requests (1)</li>
            <li class="l2"><i class="no"></i><svg><use href="#t-time"/></svg>Time Points</li>
            <li class="l2"><i class="no"></i><svg><use href="#t-ale"/></svg>ALE Adaptive Mesh Constrain</li>
            <li class="l2"><i class="no"></i><svg><use href="#t-int"/></svg>Interactions</li>
            <li class="l2"><i class="ex"></i><svg><use href="#t-intp"/></svg>Interaction Properties (1)</li>
            <li class="l2"><i class="no"></i><svg><use href="#t-ctl"/></svg>Contact Controls</li>
            <li class="l2"><i class="no"></i><svg><use href="#t-init"/></svg>Contact Initializations</li>
            <li class="l2"><i class="no"></i><svg><use href="#t-stab"/></svg>Contact Stabilizations</li>
            <li class="l2"><i class="ex"></i><svg><use href="#t-con"/></svg>Constraints (14)</li>
            <li class="l2"><i class="no"></i><svg><use href="#t-conn"/></svg>Connector Sections</li>
            <li class="l2"><i class="ex"></i><svg><use href="#t-fld"/></svg>Fields</li>
            <li class="l2"><i class="no"></i><svg><use href="#t-amp"/></svg>Amplitudes</li>
            <li class="l2"><i class="ex"></i><svg><use href="#t-load"/></svg>Loads (1)</li>
            <li class="l2"><i class="ex"></i><svg><use href="#t-bc"/></svg>BCs (1)</li>
            <li class="l2"><i class="no"></i><svg><use href="#t-pre"/></svg>Predefined Fields</li>
            <li class="l2"><i class="no"></i><svg><use href="#t-rem"/></svg>Remeshing Rules</li>
            <li class="l2"><i class="no"></i><svg><use href="#t-opt"/></svg>Optimization Tasks</li>
            <li class="l2"><i class="no"></i><svg><use href="#t-sk"/></svg>Sketches</li>
            <li class="l0"><i class="no"></i><svg><use href="#t-ann"/></svg>Annotations</li>
            <li class="l0"><i class="ex minus"></i><svg><use href="#t-ana"/></svg>Analysis</li>
          </ul>
        </div>
        <div class="vbar"><i></i></div>
        <div class="hbar"><i></i></div>
      </div>
    </div>
  </aside>

  <section class="work">
    <div class="context">
      <label for="module">Module:</label><span class="combo c-mod"><i class="ud"></i><select id="module"><option>Assembly</option></select></span>
      <label for="model">Model:</label><span class="combo c-model"><i class="ud"></i><select id="model"><option>Model-1</option></select></span>
      <label for="step">Step:</label><span class="combo c-step"><i class="ud"></i><select id="step"><option>Initial</option></select></span>
    </div>
    <div class="stage">
      <div class="toolbox">
        <div class="set"><button aria-label="Create instance"><svg><use href="#Lpart"/></svg></button><button aria-label="Linear pattern"><svg><use href="#grid"/></svg></button><button aria-label="Radial pattern"><svg><use href="#ring"/></svg></button><button aria-label="Translate"><svg><use href="#move"/></svg></button><button aria-label="Rotate instance"><svg><use href="#trans"/></svg></button><button aria-label="Translate to"><svg><use href="#greenpin"/></svg></button><button aria-label="Constraint"><svg><use href="#greenblk"/></svg></button><button aria-label="Merge"><svg><use href="#rings"/></svg></button></div>
        <div class="set"><button aria-label="Extrude"><svg><use href="#ypart"/></svg></button><button aria-label="Shift"><svg><use href="#ypart2"/></svg></button><button aria-label="Edit feature"><svg><use href="#yedit"/></svg></button></div>
        <div class="set tight"><button aria-label="Datum"><svg><use href="#datum"/></svg></button><button aria-label="Partition edge"><svg><use href="#oL"/></svg></button><button aria-label="Partition cell"><svg><use href="#oblk"/></svg></button><button aria-label="Cut"><svg><use href="#ocut"/></svg></button></div>
        <div class="set"><button class="xyz" aria-label="Reference point"><svg><use href="#plus"/></svg><b>(XYZ)</b></button><button aria-label="Coordinate system"><svg><use href="#csys"/></svg></button><button aria-label="Datum plane"><svg><use href="#zy"/></svg></button><button aria-label="Datum csys"><svg><use href="#redtri"/></svg></button></div>
      </div>
      <div class="viewport">
        <svg viewBox="156 56 607 289" preserveAspectRatio="xMidYMid meet">
          <g transform="translate(290 80) scale(.3333)" stroke-linejoin="round">
            <path d="M34 268L711 656 1107 386 1100 432 709 710 37 316z" fill="#17403d" stroke="#101f22" stroke-width="2"/>
            <path d="M35 274L709 662V702L36 310z" fill="#a13231" stroke="#3a1414" stroke-width="2"/>
            <path d="M709 662L1107 390 1101 428 709 702z" fill="#6b2223" stroke="#2e0d0e" stroke-width="2"/>
            <path d="M34 241L716 629 713 656 35 267z" fill="#d1cfba" stroke="#42423a" stroke-width="2"/>
            <path d="M716 629L1109 357 1107 383 713 656z" fill="#8e8d7c" stroke="#33332c" stroke-width="2"/>
            <path d="M437 43L1109 357 716 629 34 241z" fill="#dddbc5" stroke="#4c4b40" stroke-width="2"/>
            <linearGradient id="rim" x1="0" x2="1"><stop offset="0" stop-color="#77766a"/><stop offset=".3" stop-color="#a3a190"/><stop offset=".62" stop-color="#c6c4b0"/><stop offset=".85" stop-color="#dfddc8"/></linearGradient>
            <path d="M321 310L317 300 325 265 348 237 385 209 435 188 487 176 543 172 608 177 660 189 712 208 755 235 785 267 800 300 799 325z" fill="url(#rim)" stroke="#4c4b40" stroke-width="2"/>
            <path d="M543 198L600 201 655 212 712 233 752 259 782 290 799 325 785 360 748 393 700 417 645 431 573 436 507 431 440 413 387 392 347 361 327 326 321 300 328 283 348 259 385 234 435 213 487 202z" fill="#3e7f69" stroke="#203e35" stroke-width="2"/>
            <path d="M712 208v25" stroke="#4c4b40" stroke-width="2"/>
            <ellipse cx="557" cy="322" rx="16" ry="10" fill="#123c52" stroke="#16272a" stroke-width="3"/>
            <ellipse cx="557" cy="325" rx="9" ry="5" fill="#0c5590"/>
            <path d="M739 179l18 13M739 192l26-14" stroke="#b9ba2c" stroke-width="2"/>
          </g>
          <text x="543" y="143" class="rp">RP</text>
          <text x="157" y="208" class="rp">z</text>
          <g stroke="#c3c1e6" stroke-width="1.300" fill="#17606d">
            <path d="M705 83.500Q693 91 690 109L705 101 720 109Q717 91 705 83.500z"/>
            <path d="M705 106L689 115Q688 123 705 124 722 123 721 115z"/>
            <path d="M705 79v35"/>
          </g>
          <circle cx="705" cy="78.500" r="2.200" fill="#d8d0f5"/>
          <path d="M702 112h6v6h-6z" fill="#cc0808"/>
          <text x="702.500" y="74" class="rp axl">Y</text><text x="683" y="113" class="rp axl">Z</text><text x="722" y="113" class="rp axl">X</text>
          <path d="M204.500 319v-10" stroke="#0eab1a" stroke-width="2"/><path d="M201.500 310.500l3-6 3 6z" fill="#0eab1a"/>
          <path d="M204.500 319l-8 4.500" stroke="#1111ae" stroke-width="2"/><path d="M192 325.500l3.500-5 3 5z" fill="#1111ae"/>
          <path d="M204.500 319l8 4.500" stroke="#c01010" stroke-width="2"/><path d="M217 325.500l-3.500-5-3 5z" fill="#c01010"/>
          <text x="201.500" y="300" class="tr">Y</text><text x="183" y="331" class="tr">Z</text><text x="219" y="331" class="tr">X</text>
        </svg>
      </div>
    </div>
    <div class="brand"><svg viewBox="0 0 12 12"><path d="M4 1.500q4-2 4.500 0Q8 3.500 5 4.300M3.500 5.500q3 0 2 2.500Q4 10.500 1 10.200L2.500 7M8.500 5.500L7 10M11.500 5q-3 0-2.500 1.500t1 2q-.5 2-3 1.500" fill="none" stroke="#27408c" stroke-width="1.200"/></svg><span>SIMULIA</span></div>
  </section>
</main>

<footer>
  <div class="msgtabs">
    <button aria-label="Messages"><svg viewBox="0 0 12 12"><path d="M2 1h9v9H2z" fill="#e8e6d5" stroke="#a09d88"/><path d="M1 8h4v3H1z" fill="#a39342"/><path d="M3 9l3-3" stroke="#555"/></svg></button>
    <button class="cli">&gt;&gt;&gt;</button>
  </div>
  <textarea aria-label="Message area" readonly></textarea>
  <i class="sizer"></i>
</footer>
<div class="taskbar"><i></i><i></i></div>
</body>
</html>
```
FILE: styles.css
```css
* { box-sizing: border-box; }
html, body { height: 100%; }
body {
  margin: 0;
  display: flex;
  flex-direction: column;
  overflow: hidden;
  background: #f2f2f2;
  color: #26262b;
  font: 6px/8px Lato, "Noto Sans", sans-serif;
}
.defs { position: absolute; width: 0; height: 0; }
svg { display: block; flex: none; }
button, select, textarea { font: inherit; color: inherit; }
button {
  margin: 0; padding: 0; border: 0; background: none;
  display: flex; align-items: center; justify-content: center; flex: none;
}
a { color: inherit; text-decoration: none; }
u { text-underline-offset: 1px; text-decoration-thickness: 1px; }

/* menu */
.menubar { display: flex; align-items: center; height: 12px; gap: 8px; padding: 0 3px 0 2px; background: #f1f1f1; }
.menubar .app { width: 7px; height: 7px; margin-right: -3px; }
.what svg { width: 8px; height: 7px; }
.win { display: flex; gap: 4px; margin-left: auto; }
.win button { width: 6px; height: 6px; background: #fff; }
.win svg { width: 6px; height: 6px; }

/* toolbars */
.tools { display: flex; height: 14px; }
.bar {
  display: flex; align-items: center; height: 14px;
  border: solid #d2d2d2; border-width: 1px 1px 1px 0; background: #f6f6f6;
}
.bar.second { margin-left: 34px; flex: 1; border-right: 0; }
.bar button { width: 13px; height: 12px; }
.bar svg { width: 12px; height: 12px; }
.grip { flex: none; width: 4px; height: 9px; border-left: 1px dotted #999; margin-left: 1px; margin-right: -1px; }
.rule { width: 1px; height: 9px; background: #bbb; }
.bar .drop { width: 7px; }
.bar .drop svg { width: 6px; height: 6px; }
.bar .on { background: #c9e2f7; }
.bar .num { color: #c5301f; font: bold 9px/10px "Liberation Sans", sans-serif; }
.axis { position: relative; }
.axis b { position: absolute; font: bold 5px/5px "Liberation Sans", sans-serif; color: #c64a42; }
.yx b:first-of-type { left: 5px; top: 0; }
.yx b:last-of-type { right: 0; top: 5px; }
.xy b:first-of-type { left: 5px; top: 0; }
.xy b:last-of-type { left: 1px; top: 4px; }
.zx b:first-of-type { right: 0; top: 4px; }
.zx b:last-of-type { left: 4px; bottom: 0; }
.lower { padding-left: 434px; height: 15px; }
.lower .bar { border-top: 0; }

/* drop-downs */
.combo {
  position: relative; display: flex; align-items: center; flex: none;
  height: 12px; background: #fff; border: 1px solid #c4c4c4;
}
.combo select {
  appearance: none; border: 0; background: none; outline: 0;
  width: 100%; height: 10px; padding: 0 8px 0 1px; margin: 0;
}
.combo::before { content: ""; position: absolute; right: 0; top: 0; bottom: 0; width: 6px; border: 1px solid #ddd; }
.combo::after {
  content: ""; position: absolute; right: 2px; top: 3px; width: 3px; height: 3px;
  border: solid #777; border-width: 0 1px 1px 0; transform: rotate(45deg);
}
.c-parts { width: 67px; margin-right: 1px; }
.c-all { width: 53px; }
.ud { flex: none; width: 5px; height: 10px; position: relative; background: #f4f4f4; border-right: 1px solid #ddd; }
.ud::before, .ud::after, .spin::before, .spin::after {
  content: ""; position: absolute; left: 1px; border: 1px solid transparent;
}
.ud::before { top: 1px; border-bottom: 2px solid #555; }
.ud::after { bottom: 1px; border-top: 2px solid #555; }

/* main split */
main { flex: 1; display: flex; min-height: 0; }
aside { width: 122px; flex: none; display: flex; flex-direction: column; padding-top: 2px; background: #fafafa; }
.tabs { display: flex; align-items: flex-end; height: 12px; }
.tabs button { height: 10px; padding: 0 4px; border: 1px solid #ddd; border-bottom: 0; background: #ececec; }
.tabs .sel { height: 12px; background: #fafafa; }
.panel { flex: 1; min-height: 0; display: flex; flex-direction: column; border: 1px solid #d6d6d6; padding: 3px 0 0 1px; }
.dbrow { display: flex; align-items: center; gap: 1px; height: 12px; }
.dbrow svg { width: 10px; height: 10px; }
.dbrow button { width: 11px; }
.dbrow .spin { position: relative; width: 8px; height: 9px; margin-left: 2px; }
.dbrow .spin::before { top: 0; left: 2px; border: 2px solid transparent; border-bottom-color: #999; }
.dbrow .spin::after { bottom: 0; left: 2px; border: 2px solid transparent; border-top-color: #999; }
.c-db { flex: 1; }
.treebox {
  flex: 1; min-height: 0; display: grid; margin-top: 2px;
  grid-template: minmax(0, 1fr) 8px / minmax(0, 1fr) 5px;
  border: 1px solid #ccc; background: #fff;
}
.tree { overflow: hidden; }
.tree ul {
  margin: 0; padding: 0; list-style: none;
  height: calc(100% + 3px); display: grid; grid-auto-rows: minmax(0, 1fr);
}
.tree li { display: flex; align-items: center; white-space: nowrap; gap: 3px; }
.tree li svg { width: 9px; height: 9px; margin: 0 -2px 0 -1px; }
.l1 { padding-left: 8px; }
.l2 { padding-left: 17px; }
.ex { position: relative; flex: none; width: 5px; height: 5px; border: 1px solid #c6cad4; background: #f2f3fa; }
.ex::before { content: ""; position: absolute; left: 0; top: 1px; width: 3px; height: 1px; background: #9498a8; }
.ex:not(.minus)::after { content: ""; position: absolute; left: 1px; top: 0; width: 1px; height: 3px; background: #9498a8; }
.no { flex: none; width: 5px; height: 1px; background: linear-gradient(90deg, transparent 40%, #ccc 40%); }
.vbar { background: #f1f1f1; padding: 8px 2px 44px 1px; display: flex; }
.vbar i { flex: 1; background: #969696; border-radius: 1px; }
.hbar { background: #f1f1f1; padding: 3px 21px 3px 8px; display: flex; }
.hbar i { flex: 1; background: #969696; border-radius: 1px; }

/* work area */
.work { flex: 1; min-width: 0; display: flex; flex-direction: column; padding-left: 3px; background: #f7f7f7; }
.context { display: flex; align-items: center; height: 15px; padding: 0 3px; background: linear-gradient(#fff, #ececec); }
.context label { margin-right: 3px; }
.context .combo { margin-right: 6px; }
.c-mod { width: 54px; }
.c-model { width: 44px; }
.c-step { width: 44px; }
.stage { flex: 1; min-height: 0; display: flex; }
.toolbox { width: 31px; flex: none; background: #f2f2f2; padding-top: 2px; }
.set { display: grid; grid-template-columns: 14px 14px; grid-auto-rows: 14px; padding: 0 1px 1px; margin-bottom: 2px; border-bottom: 1px solid #ccc; }
.set:last-child { border: 0; }
.tight { grid-auto-rows: 13px; padding-bottom: 3px; }
.set button svg { width: 12px; height: 12px; }
.xyz { position: relative; }
.xyz b { position: absolute; left: 0; top: 1px; font: bold 5px/6px "Liberation Sans", sans-serif; }
.viewport {
  flex: 1; min-width: 0; margin-right: 1px;
  background: linear-gradient(#1e2f4b, #2b3f5c 46%, #34486a 60%, #66788f 78%, #9fafc8);
}
.viewport svg { width: 100%; height: 100%; }
.rp { font: 8px "Liberation Sans", sans-serif; fill: #b9ba2c; }
.rp.axl { font-size: 7px; fill: #a0a02c; }
.tr { font: bold 9px "Liberation Sans", sans-serif; fill: #f2f4f8; }
.brand {
  display: flex; align-items: center; justify-content: flex-end; gap: 3px; height: 18px; padding-right: 2px;
  background: linear-gradient(#fff, #ececec); color: #27408c; font: italic bold 8px/10px "DejaVu Sans", sans-serif;
}
.brand svg { width: 11px; height: 11px; }

/* message area */
footer { display: flex; height: 32px; background: #f0f0f0; border-top: 1px solid #d8d8d8; }
.msgtabs { width: 19px; padding: 3px 4px 0; display: flex; flex-direction: column; gap: 6px; overflow: hidden; }
.msgtabs svg { width: 12px; height: 12px; }
.cli { height: 10px; background: #e9dc71; border: 1px solid #77733b; font-weight: bold; }
footer textarea { flex: 1; resize: none; border: 1px solid #ccc; background: #fff; margin: 0; outline: 0; }
.sizer { width: 8px; height: 8px; align-self: flex-end; margin-left: 1px; background: radial-gradient(#bbb 30%, transparent 40%) 0 0 / 3px 3px; }
.taskbar { height: 5px; background: #202127; display: flex; gap: 486px; padding-left: 15px; overflow: hidden; }
.taskbar i { width: 7px; height: 7px; border-radius: 4px; margin-top: 2px; background: #d9707c; }
.taskbar i + i { background: #8798a3; }
```
